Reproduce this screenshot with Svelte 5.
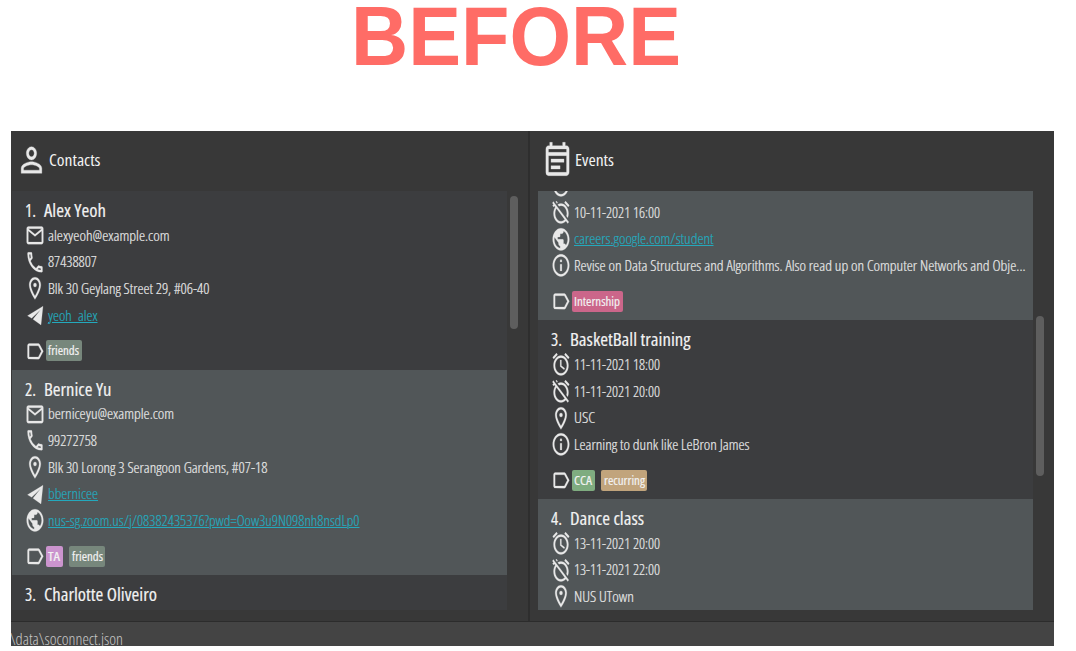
<script>
  const icons = {
    person: 'M12 5.9c1.16 0 2.1.94 2.1 2.1s-.94 2.1-2.1 2.1S9.9 9.16 9.9 8s.94-2.1 2.1-2.1m0 9c2.97 0 6.1 1.46 6.1 2.1v1.1H5.9V17c0-.64 3.13-2.1 6.1-2.1M12 4C9.79 4 8 5.79 8 8s1.79 4 4 4 4-1.79 4-4-1.79-4-4-4zm0 9c-2.67 0-8 1.34-8 4v3h16v-3c0-2.66-5.33-4-8-4z',
    note: 'M19 4h-1V2h-2v2H8V2H6v2H5c-1.11 0-1.99.9-1.99 2L3 20a2 2 0 0 0 2 2h14c1.1 0 2-.9 2-2V6c0-1.1-.9-2-2-2zm0 16H5V10h14v10zm0-12H5V6h14v2zM7 12h10v2H7zm0 4h7v2H7z',
    mail: 'M22 6c0-1.1-.9-2-2-2H4c-1.1 0-2 .9-2 2v12c0 1.1.9 2 2 2h16c1.1 0 2-.9 2-2V6zm-2 0l-8 5-8-5h16zm0 12H4V8l8 5 8-5v10z',
    phone: 'M6.54 5c.06.89.21 1.76.45 2.59l-1.2 1.2c-.41-1.2-.67-2.47-.76-3.79h1.51m9.86 12.02c.85.24 1.72.39 2.6.45v1.49c-1.32-.09-2.59-.35-3.8-.75l1.2-1.19M7.5 3H4c-.55 0-1 .45-1 1 0 9.39 7.61 17 17 17 .55 0 1-.45 1-1v-3.49c0-.55-.45-1-1-1-1.24 0-2.45-.2-3.57-.57a.84.84 0 0 0-.31-.05c-.26 0-.51.1-.71.29l-2.2 2.2a15.149 15.149 0 0 1-6.59-6.59l2.2-2.2c.28-.28.36-.67.25-1.02A11.36 11.36 0 0 1 8.5 4c0-.55-.45-1-1-1z',
    place: 'M12 2C8.13 2 5 5.13 5 9c0 5.25 7 13 7 13s7-7.75 7-13c0-3.87-3.13-7-7-7zM7 9c0-2.76 2.24-5 5-5s5 2.24 5 5c0 2.88-2.88 7.19-5 9.88C9.92 16.21 7 11.85 7 9zM12 7.1a1.9 1.9 0 1 1 0 3.8a1.9 1.9 0 0 1 0-3.8z',
    plane: 'M21.6 3.8L3 12.4l5 2.3L18.7 7L9.6 15.6l9.6 5z',
    globe: 'M12 2C6.48 2 2 6.48 2 12s4.48 10 10 10 10-4.48 10-10S17.52 2 12 2zm-1 17.93c-3.95-.49-7-3.85-7-7.93 0-.62.08-1.21.21-1.79L9 15v1c0 1.1.9 2 2 2v1.93zm6.9-2.54c-.26-.81-1-1.39-1.9-1.39h-1v-3c0-.55-.45-1-1-1H8v-2h2c.55 0 1-.45 1-1V7h2c1.1 0 2-.9 2-2v-.41c2.93 1.19 5 4.06 5 7.41 0 2.08-.8 3.97-2.1 5.39z',
    info: 'M11 7h2v2h-2zm0 4h2v6h-2zm1-9C6.48 2 2 6.48 2 12s4.48 10 10 10 10-4.48 10-10S17.52 2 12 2zm0 18c-4.41 0-8-3.59-8-8s3.59-8 8-8 8 3.59 8 8-3.59 8-8 8z',
    label: 'M17.63 5.84C17.27 5.33 16.67 5 16 5L5 5.01C3.9 5.01 3 5.9 3 7v10c0 1.1.9 1.99 2 1.99L16 19c.67 0 1.27-.33 1.63-.84L22 12l-4.37-6.16zM16 17H5V7h11l3.55 5L16 17z',
    alarm: 'M22 5.72l-4.6-3.86-1.29 1.53 4.6 3.86L22 5.72zM7.88 3.39L6.6 1.86 2 5.71l1.29 1.53 4.59-3.85zM12.5 8H11v6l4.75 2.85.75-1.23-4-2.37V8zM12 4c-4.97 0-9 4.03-9 9s4.02 9 9 9c4.97 0 9-4.03 9-9s-4.03-9-9-9zm0 16c-3.87 0-7-3.13-7-7s3.13-7 7-7 7 3.13 7 7-3.13 7-7 7z',
    alarmOff: 'M12 6c3.87 0 7 3.13 7 7 0 .84-.16 1.65-.43 2.4l1.52 1.52c.58-1.19.91-2.51.91-3.92 0-4.97-4.03-9-9-9-1.41 0-2.73.33-3.92.91L9.6 6.43C10.35 6.16 11.16 6 12 6zm10-.28l-4.6-3.86-1.29 1.53 4.6 3.86L22 5.72zM2.92 2.29L1.65 3.57 2.98 4.9l-1.11.93 1.42 1.42 1.11-.94.8.8C3.83 8.69 3 10.75 3 13c0 4.97 4.02 9 9 9 2.25 0 4.31-.83 5.89-2.2l2.2 2.2 1.27-1.27L3.89 3.27l-.97-.98zm13.55 16.1C15.26 19.39 13.7 20 12 20c-3.87 0-7-3.13-7-7 0-1.7.61-3.26 1.61-4.47l9.86 9.86zM8.02 3.28L6.6 1.86l-.86.71 1.42 1.42.86-.71z'
  };

  const sage = '#77877c';
  const contacts = [
    {
      n: '1.', name: 'Alex Yeoh', w: 62,
      rows: [
        { icon: 'mail', text: 'alexyeoh@example.com', w: 121.5 },
        { icon: 'phone', text: '87438807', w: 49 },
        { icon: 'place', text: 'Blk 30 Geylang Street 29, #06-40', w: 161.5 },
        { icon: 'plane', text: 'yeoh_alex', w: 49.5, link: true }
      ],
      tags: [{ text: 'friends', w: 31, color: sage }]
    },
    {
      n: '2.', name: 'Bernice Yu', w: 67.5, alt: true,
      rows: [
        { icon: 'mail', text: 'berniceyu@example.com', w: 126 },
        { icon: 'phone', text: '99272758', w: 49 },
        { icon: 'place', text: 'Blk 30 Lorong 3 Serangoon Gardens, #07-18', w: 219.5 },
        { icon: 'plane', text: 'bbernicee', w: 50, link: true },
        { icon: 'globe', text: 'nus-sg.zoom.us/j/08382435376?pwd=Oow3u9N098nh8nsdLp0', w: 311.5, link: true }
      ],
      tags: [{ text: 'TA', w: 12, color: '#cb94ce' }, { text: 'friends', w: 31, color: sage }]
    },
    { n: '3.', name: 'Charlotte Oliveiro', w: 113, rows: [], tags: [] }
  ];
  const events = [
    {
      alt: true,
      rows: [
        { icon: 'alarm' },
        { icon: 'alarmOff', text: '10-11-2021 16:00', w: 86 },
        { icon: 'globe', text: 'careers.google.com/student', w: 139.5, link: true },
        { icon: 'info', text: 'Revise on Data Structures and Algorithms. Also read up on Computer Networks and Obje...', w: 451.5 }
      ],
      tags: [{ text: 'Internship', w: 46, color: '#cb668a' }]
    },
    {
      n: '3.', name: 'BasketBall training', w: 120.5,
      rows: [
        { icon: 'alarm', text: '11-11-2021 18:00', w: 86 },
        { icon: 'alarmOff', text: '11-11-2021 20:00', w: 86 },
        { icon: 'place', text: 'USC', w: 21 },
        { icon: 'info', text: 'Learning to dunk like LeBron James', w: 175.5 }
      ],
      tags: [{ text: 'CCA', w: 18, color: '#7fac80' }, { text: 'recurring', w: 41, color: '#c1a47c' }]
    },
    {
      n: '4.', name: 'Dance class', w: 74, alt: true,
      rows: [
        { icon: 'alarm', text: '13-11-2021 20:00', w: 86 },
        { icon: 'alarmOff', text: '13-11-2021 22:00', w: 86 },
        { icon: 'place', text: 'NUS UTown', w: 60 }
      ],
      tags: []
    }
  ];

  // Condenses a label horizontally so that it fills the width it is given.
  function fit(node, width) {
    const inner = node.firstElementChild;
    inner.style.transform = `scaleX(${width / inner.offsetWidth})`;
    const exact = inner.getBoundingClientRect().width;
    inner.style.transform = `scaleX(${(width / inner.offsetWidth) * (width / exact)})`;
  }
</script>

{#snippet icon(name)}
  <svg class="icon" viewBox="0 0 24 24" preserveAspectRatio="none" aria-hidden="true"><path d={icons[name]} /></svg>
{/snippet}

{#snippet label(text, w)}
  <span class="fit" use:fit={w} style:width="{w}px"><span class="inner">{text}</span></span>
{/snippet}

{#snippet list(cards)}
  {#each cards as card}
    <article class="card" class:alt={card.alt}>
      {#if card.name}
        <h2><span class="num">{@render label(card.n, 11)}</span>{@render label(card.name, card.w)}</h2>
      {/if}
      {#each card.rows as row}
        <div class="row" class:link={row.link}>
          {@render icon(row.icon)}
          {#if row.text}{@render label(row.text, row.w)}{/if}
        </div>
      {/each}
      {#if card.tags.length}
        <div class="tags">
          {@render icon('label')}
          {#each card.tags as tag}
            <span class="tag" style:background={tag.color}>{@render label(tag.text, tag.w)}</span>
          {/each}
        </div>
      {/if}
    </article>
  {/each}
{/snippet}

<main>
  <h1>{@render label('BEFORE', 330)}</h1>
  <div class="window">
    <div class="panes">
      <section class="pane contacts">
        <header>{@render icon('person')}{@render label('Contacts', 51.5)}</header>
        <div class="body">
          <div class="list">{@render list(contacts)}</div>
          <div class="bar"></div>
        </div>
      </section>
      <section class="pane events">
        <header>{@render icon('note')}{@render label('Events', 39)}</header>
        <div class="body">
          <div class="list">{@render list(events)}</div>
          <div class="bar"></div>
        </div>
      </section>
    </div>
    <footer>{@render label('\\data\\soconnect.json', 113)}</footer>
  </div>
</main>

<style>
  :global(body) { background: #fff; }
  main {
    box-sizing: border-box;
    width: 1076px;
    height: 651px;
    padding-left: 11px;
    font-family: 'Open Sans', 'Noto Sans', sans-serif;
    font-stretch: 75%;
    color: #e6e6e6;
  }
  h1 {
    margin: 0;
    height: 131px;
    padding-left: 340px;
    box-sizing: border-box;
    font: bold 82.5px/72px 'Liberation Sans', Arial, sans-serif;
    color: #ff6c66;
  }
  .fit { display: inline-block; white-space: nowrap; flex: none; }
  .inner { display: inline-block; transform-origin: 0 50%; }
  .window {
    width: 1043px;
    height: 515px;
    display: flex;
    flex-direction: column;
    background: #383838;
    overflow: hidden;
  }
  .panes { display: flex; height: 490px; }
  .pane { box-sizing: border-box; }
  .contacts { width: 519px; border-right: 2px solid #2e2e2e; padding-left: 1px; }
  .events { width: 524px; padding-left: 8px; }
  header {
    height: 60px;
    display: flex;
    align-items: center;
    font-size: 16.5px;
    line-height: 24px;
    font-weight: 500;
    color: #f2f2f2;
    box-sizing: border-box;
    padding: 0 0 2px 4px;
  }
  header .icon { width: 31px; height: 40px; margin: 0 2px 0 0; }
  .events header .icon { margin-bottom: 2.5px; }
  .icon {
    display: block;
    flex: none;
    width: 20px;
    height: 26.7px;
    margin-top: 0.4px;
    fill: #e8e8e8;
    stroke: #e8e8e8;
    stroke-width: 0.2;
  }
  .body { display: flex; height: 419px; }
  .list { width: 495px; overflow: hidden; display: flex; flex-direction: column; }
  .card { flex: none; box-sizing: border-box; padding: 0 0 5.7px 12.7px; background: #3c3d3f; }
  .card.alt { background: #515658; }
  .card:last-child { flex: 1 0 auto; }
  .events .card:first-child { margin-top: -19px; }
  h2 {
    margin: 0;
    height: 30.5px;
    box-sizing: border-box;
    padding-top: 6.8px;
    display: flex;
    font-size: 17.6px;
    line-height: 24px;
    font-weight: 500;
    color: #f2f2f2;
    -webkit-text-stroke: 0.15px;
  }
  .num { width: 19px; }
  .row {
    display: flex;
    height: 26.7px;
    gap: 3px;
    font-size: 15.4px;
    line-height: 28.1px;
    font-weight: 300;
    -webkit-text-stroke: 0.2px;
  }
  .link { color: #24a9bd; }
  .link .inner { text-decoration: underline; text-decoration-thickness: 1px; text-underline-offset: 1px; }
  .tags { display: flex; align-items: center; height: 26.7px; margin-top: 9.2px; }
  .tag {
    height: 21px;
    box-sizing: border-box;
    padding: 0 2.6px;
    margin: 0 6px 0 1.1px;
    border-radius: 2px;
    font-size: 12px;
    line-height: 21.6px;
    font-weight: 500;
    color: #f2f2f2;
    -webkit-text-stroke: 0.15px;
  }
  .tag + .tag { margin-left: 0; }
  .bar { width: 8.5px; border-radius: 4px; background: #5e5e5e; margin-left: 2.5px; }
  .contacts .bar { height: 133px; margin-top: 5px; }
  .events .bar { height: 160px; margin-top: 125px; }
  footer {
    height: 25px;
    box-sizing: border-box;
    border-top: 1px solid #2c2c2c;
    background: #444;
    font-size: 16px;
    line-height: 35.5px;
    font-weight: 300;
    color: #c8c8c8;
    overflow: hidden;
  }
  footer .fit { margin-left: -1.5px; }
</style>
